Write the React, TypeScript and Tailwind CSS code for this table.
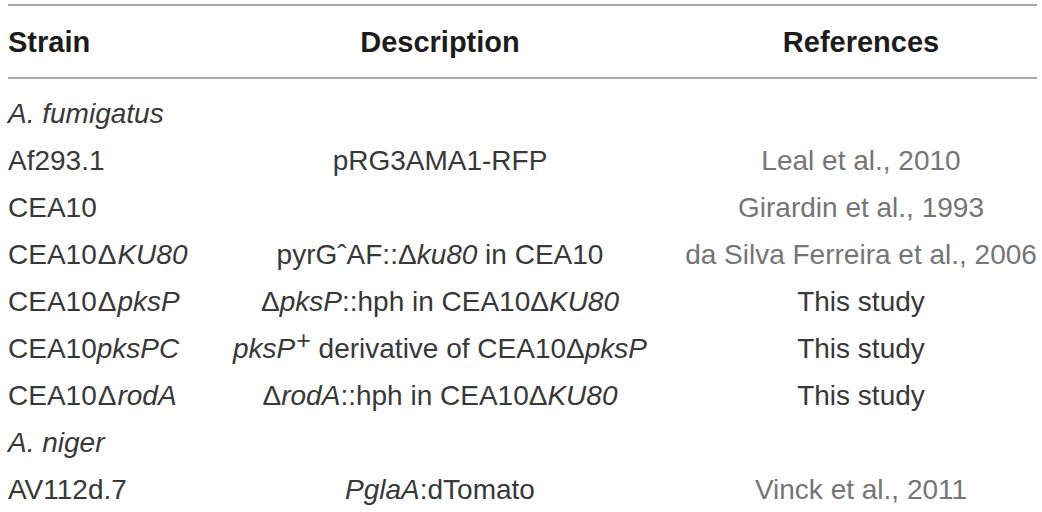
import type { ReactNode } from 'react'

type Row = {
  strain: ReactNode
  desc?: ReactNode
  ref?: ReactNode
  link?: boolean
  group?: boolean
}

const rows: Row[] = [
  { strain: <i>A. fumigatus</i>, group: true },
  { strain: 'Af293.1', desc: 'pRG3AMA1-RFP', ref: 'Leal et al., 2010', link: true },
  { strain: 'CEA10', ref: 'Girardin et al., 1993', link: true },
  {
    strain: <>CEA10<span className="mx-[1px]">Δ</span><i>KU80</i></>,
    desc: <>pyrGˆAF::Δ<i>ku80</i> in CEA10</>,
    ref: 'da Silva Ferreira et al., 2006',
    link: true,
  },
  {
    strain: <>CEA10<span className="mx-[1px]">Δ</span><i>pksP</i></>,
    desc: <>Δ<i>pksP</i>::hph in CEA10Δ<i>KU80</i></>,
    ref: 'This study',
  },
  {
    strain: <>CEA10<i>pksPC</i></>,
    desc: (
      <>
        <i>pksP</i>
        <span className="inline-block text-[25px] leading-none relative -top-[9px] ml-[1px]">+</span> derivative of
        CEA10Δ<i>pksP</i>
      </>
    ),
    ref: 'This study',
  },
  {
    strain: <>CEA10<span className="mx-[1px]">Δ</span><i>rodA</i></>,
    desc: <>Δ<i>rodA</i>::hph in CEA10Δ<i>KU80</i></>,
    ref: 'This study',
  },
  { strain: <i>A. niger</i>, group: true },
  {
    strain: 'AV112d.7',
    desc: <><i>PglaA</i>:dTomato</>,
    ref: 'Vinck et al., 2011',
    link: true,
  },
]

export default function App() {
  return (
    <div className="w-[1042px] h-[512px] bg-white overflow-hidden pl-2 pt-1 font-['Liberation_Sans',Arial,sans-serif]">
      <div className="w-[1029px]">
        <div className="h-[2px] bg-[#a8a8a8]" />
        {/* header */}
        <div className="grid grid-cols-[187px_490px_352px] h-[47px] mt-[13px] mb-[11px] items-center leading-[47px] text-[29px] font-bold text-[#1c1c1c]">
          <div>Strain</div>
          <div className="text-center">Description</div>
          <div className="text-center">References</div>
        </div>
        <div className="h-[2px] bg-[#a8a8a8]" />
        <div className="pt-[11px] text-[28px] text-[#383838]">
          {rows.map((r, i) => (
            <div
              key={i}
              className="grid grid-cols-[187px_490px_352px] h-[47px] leading-[47px] whitespace-nowrap"
            >
              <div className={r.group ? 'col-span-3' : ''}>{r.strain}</div>
              {!r.group && (
                <>
                  <div className="text-center">{r.desc}</div>
                  <div className={`text-center ${r.link ? 'text-[#757575]' : ''}`}>{r.ref}</div>
                </>
              )}
            </div>
          ))}
        </div>
      </div>
    </div>
  )
}
